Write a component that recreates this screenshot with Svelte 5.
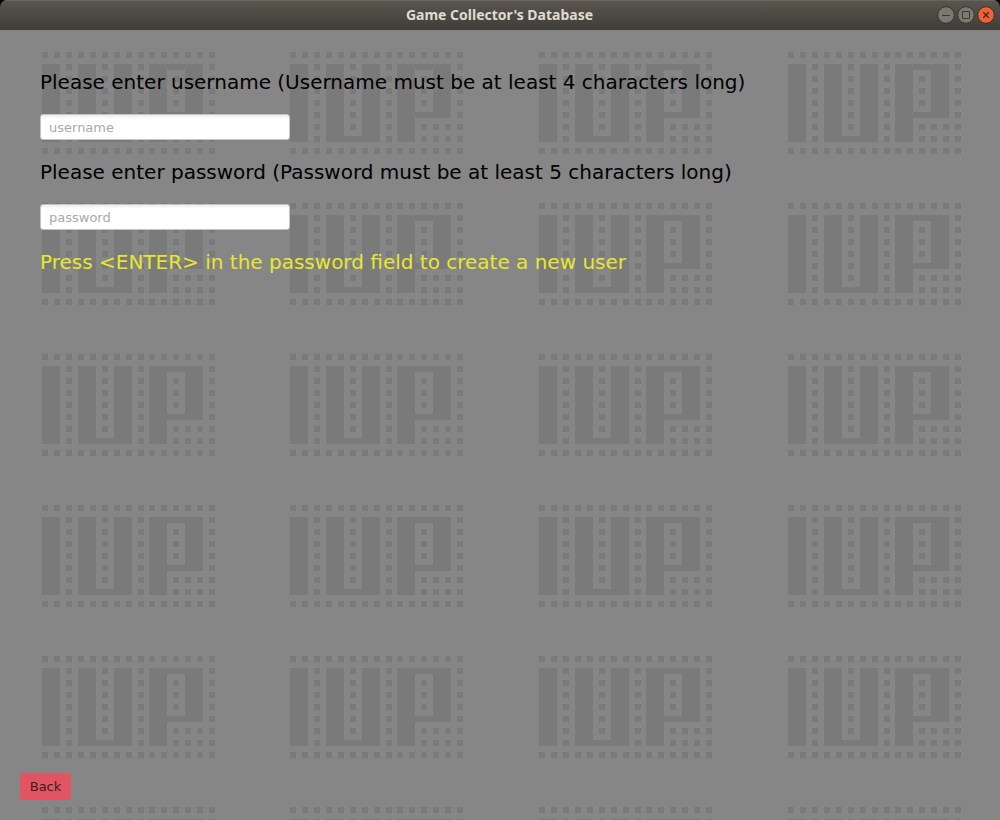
<script>
  const rows = [0, 1, 2, 3, 4, 5];
  const cols = [0, 1, 2, 3];
  const xs = [0, 12, 24, 36, 48, 60, 72, 84, 96, 107, 119, 131, 143, 155, 167];
  const dots = [];
  for (const x of xs) dots.push([x, 0], [x, 96]);
  for (const x of [24, 96, 167]) for (let r = 1; r <= 7; r++) dots.push([x, r * 12]);
  for (let r = 1; r <= 6; r++) dots.push([60, r * 12]);
  for (let r = 2; r <= 4; r++) dots.push([131, r * 12]);
  for (const x of [131, 143, 155]) dots.push([x, 72], [x, 84]);
  const dotPath = dots.map(([x, y]) => `M${x} ${y}h6v6h-6z`).join('');
  const letters =
    'M0 12h18v78h-18z' +
    'M36 12h18v72h18v-72h18v78h-54z' +
    'M107 12h54v54h-36v24h-18zM125 18v42h18v-42z';
  let username = $state('');
  let password = $state('');
</script>

<div class="window">
  <header>
    <h1>Game Collector's Database</h1>
    <div class="controls">
      <svg viewBox="0 0 18 18"><circle class="btn" cx="9" cy="9" r="8.3" /><path class="glyph" d="M5 9.5h8" /></svg>
      <svg viewBox="0 0 18 18"><circle class="btn" cx="9" cy="9" r="8.3" /><path class="glyph" d="M5.5 5.5h7v7h-7z" /></svg>
      <svg viewBox="0 0 18 18"><circle class="btn close" cx="9" cy="9" r="8.3" /><path class="glyph dark" d="M6.3 6.3l5.4 5.4M11.7 6.3l-5.4 5.4" /></svg>
    </div>
  </header>
  <main>
    <svg class="pattern" width="1000" height="790" viewBox="0 30 1000 790" shape-rendering="crispEdges" aria-hidden="true">
      {#each rows as r}
        {#each cols as c}
          <path transform={`translate(${42 + c * 249 - (c ? 1 : 0)} ${52 + r * 151})`} d={letters + dotPath} fill-rule="evenodd" />
        {/each}
      {/each}
    </svg>
    <form>
      <label for="user">Please enter username (Username must be at least 4 characters long)</label>
      <input id="user" placeholder="username" bind:value={username} />
      <label for="pass">Please enter password (Password must be at least 5 characters long)</label>
      <input id="pass" type="password" placeholder="password" bind:value={password} />
      <p>Press &lt;ENTER&gt; in the password field to create a new user</p>
    </form>
    <button type="button">Back</button>
  </main>
</div>

<style>
  :global(body) { margin: 0; background: #000; }
  .window {
    width: 1000px;
    height: 820px;
    display: flex;
    flex-direction: column;
    overflow: hidden;
    border-radius: 7px 7px 0 0;
    font-family: "DejaVu Sans", sans-serif;
  }
  header {
    height: 30px;
    flex: none;
    box-sizing: border-box;
    display: grid;
    grid-template-columns: 1fr auto 1fr;
    align-items: center;
    padding: 0 5px 0 4px;
    background: linear-gradient(#59574e, #3e3d38);
    box-shadow: inset 0 1px #68665d;
  }
  h1 {
    grid-column: 2;
    margin: 0;
    font: bold 14px/30px "Noto Sans", sans-serif;
    letter-spacing: 0;
    color: #dfdbd2;
    white-space: nowrap;
  }
  .controls { justify-self: end; display: flex; gap: 2px; }
  .controls svg { width: 18px; height: 18px; }
  .btn { fill: #7b7a72; stroke: #35342f; stroke-width: 1; }
  .close { fill: #ee6237; stroke: #4a2c20; }
  .glyph { fill: none; stroke: #3b3a35; stroke-width: 1; }
  .dark { stroke: #48200f; stroke-width: 1.3; }
  main {
    position: relative;
    flex: 1;
    box-sizing: border-box;
    display: flex;
    flex-direction: column;
    justify-content: space-between;
    align-items: flex-start;
    padding: 40px 20px 20px;
    background: #868686;
  }
  .pattern { position: absolute; inset: 0; fill: #7a7a7a; }
  form {
    position: relative;
    display: flex;
    flex-direction: column;
    align-items: flex-start;
    padding-left: 20px;
  }
  label, p {
    margin: 0;
    font-size: 20px;
    line-height: 24px;
    color: #000;
    white-space: nowrap;
  }
  input {
    width: 250px;
    height: 26px;
    box-sizing: border-box;
    margin: 20px 0;
    padding: 0 8px;
    border: 1px solid #c4c4c4;
    border-radius: 3px;
    background: linear-gradient(#ededed, #fff 4px);
    font: 13px "DejaVu Sans", sans-serif;
    color: #333;
    outline: none;
  }
  input::placeholder { color: #a9a9a9; opacity: 1; }
  p { color: #e8e82a; }
  button {
    position: relative;
    width: 51px;
    height: 27px;
    padding: 0;
    border: 0;
    border-radius: 3px;
    background: #e05561;
    color: #3c1c20;
    font: 13px "DejaVu Sans", sans-serif;
  }
</style>
